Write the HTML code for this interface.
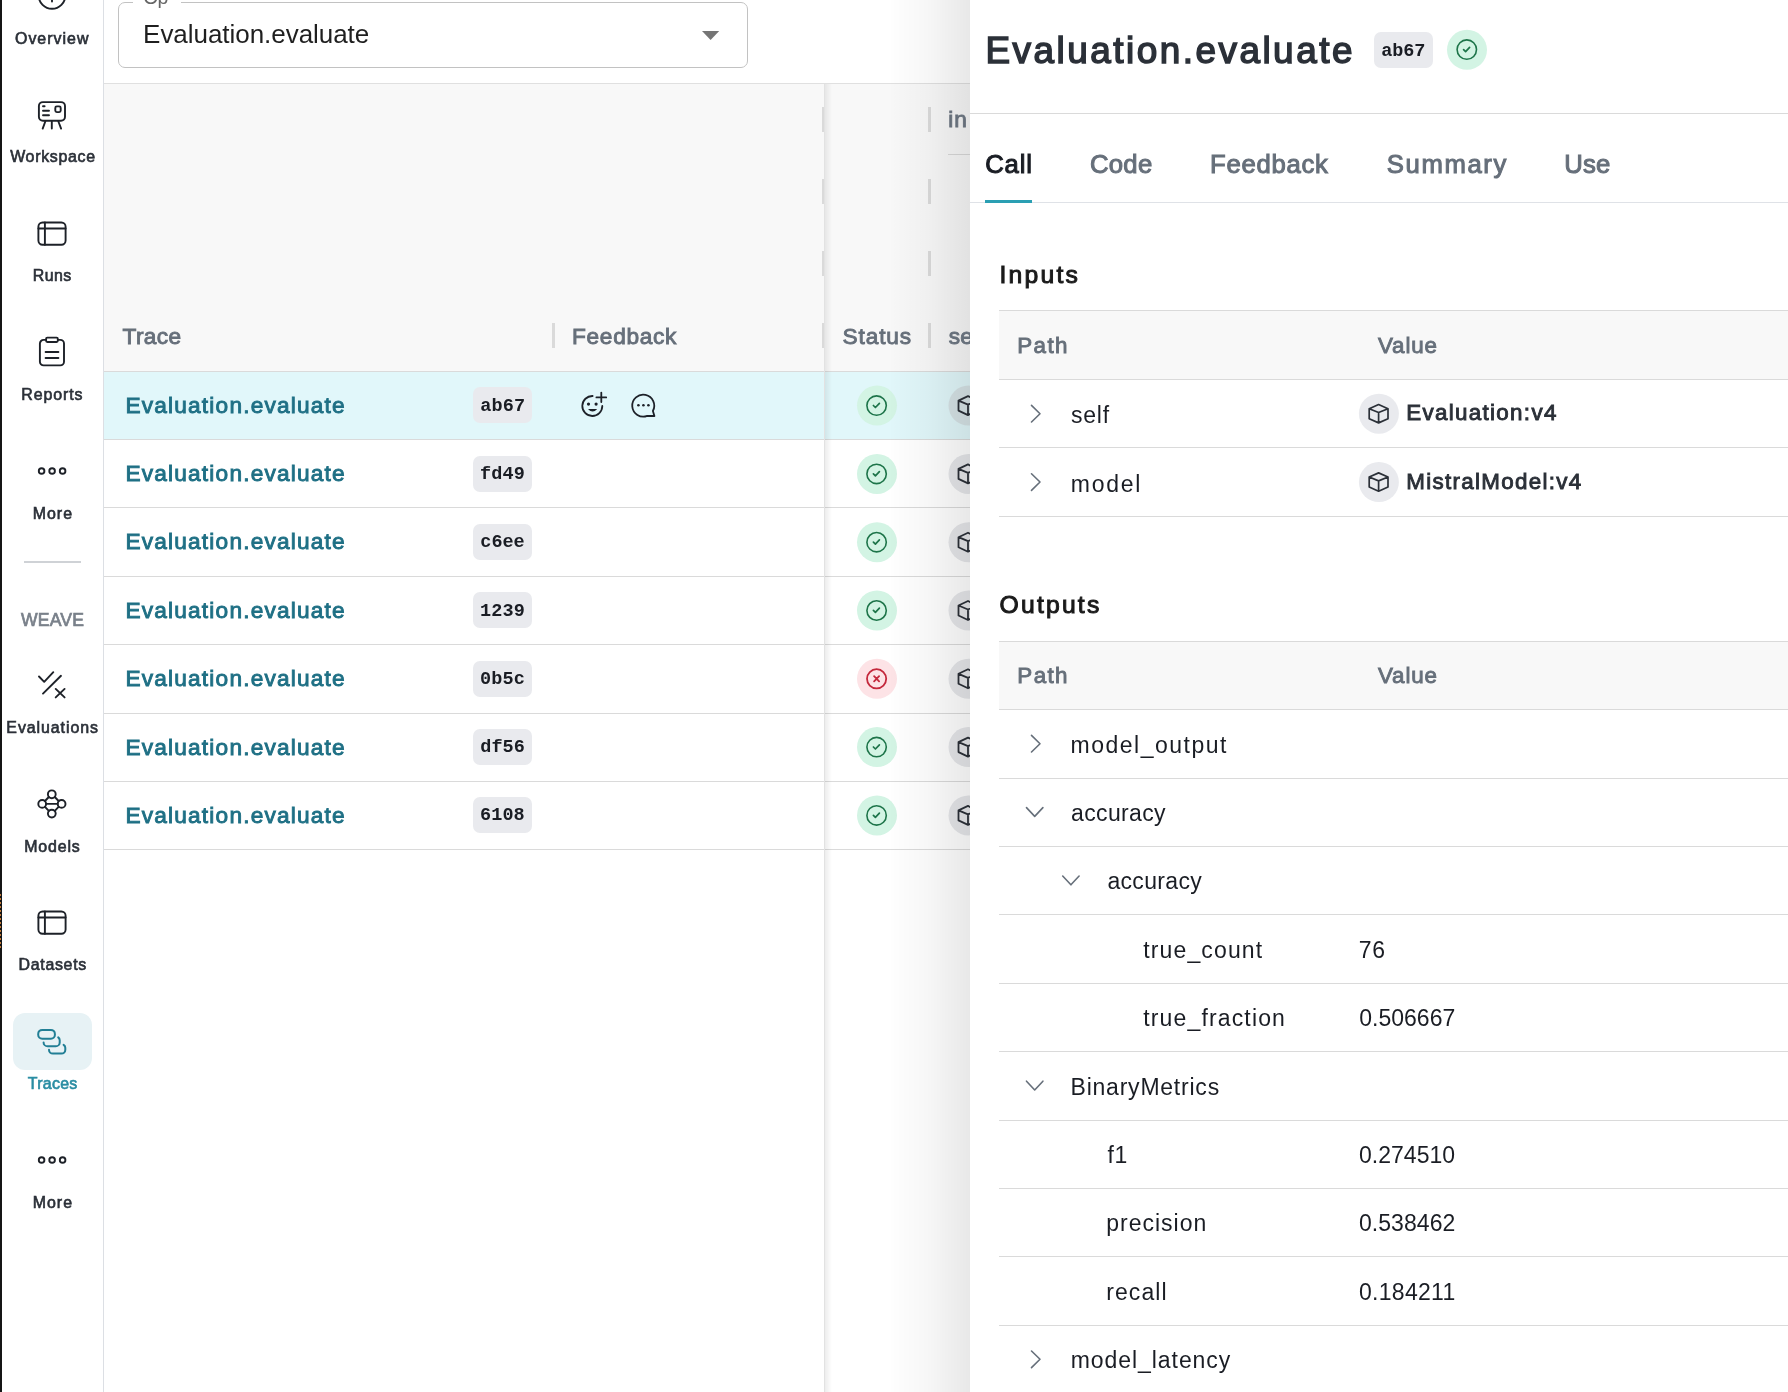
<!DOCTYPE html>
<html><head><meta charset="utf-8"><title>Weave Traces</title>
<style>
html,body{margin:0;padding:0;}
body{width:1788px;height:1392px;position:relative;overflow:hidden;background:#ffffff;font-family:"Liberation Sans",sans-serif;}
.b{position:absolute;}
.t{position:absolute;white-space:pre;}
.grp{position:absolute;overflow:hidden;will-change:transform;}
</style></head><body>
<div class="grp" style="left:0;top:0;width:104px;height:1392px;"><div class="b" style="left:0px;top:0px;width:2px;height:1392px;background:#151515;"></div>
<div class="b" style="left:0px;top:894px;width:1px;height:54px;background:repeating-linear-gradient(to bottom, #c27a38 0px, #c27a38 2.5px, transparent 2.5px, transparent 4px);"></div>
<div class="b" style="left:103px;top:0px;width:1px;height:1392px;background:#dcdfe4;"></div>
<div class="b" style="left:24px;top:561px;width:57px;height:2px;background:#cfd2d6;"></div>
<div class="b" style="left:13px;top:1013px;width:79px;height:57px;background:#e7f2f5;border-radius:12px;"></div>
<svg class="b" style="left:0px;top:-20px;" width="104" height="1200" viewBox="0 -20 104 1200" fill="none"><circle cx="52" cy="-4.5" r="13.3" stroke="#1d2128" stroke-width="1.9" stroke-linecap="round" stroke-linejoin="round"/><path d="M52 -6 V1.5" stroke="#1d2128" stroke-width="1.9" stroke-linecap="round" stroke-linejoin="round"/><rect x="38.9" y="102.1" width="26.1" height="18.6" rx="4" stroke="#1d2128" stroke-width="1.9" stroke-linecap="round" stroke-linejoin="round"/><path d="M43 106.2 H44.6 M43 110.7 H49 M43 115.3 H49" stroke="#1d2128" stroke-width="1.9" stroke-linecap="round" stroke-linejoin="round"/><rect x="55.3" y="106.4" width="5.4" height="5.7" rx="1.5" stroke="#1d2128" stroke-width="1.9" stroke-linecap="round" stroke-linejoin="round"/><path d="M45.3 121.5 L42.7 128.6 M51.8 121.5 V128.6 M58.4 121.5 L61.1 128.6" stroke="#1d2128" stroke-width="1.9" stroke-linecap="round" stroke-linejoin="round"/><rect x="38.4" y="222.5" width="27.2" height="22.2" rx="4.2" stroke="#1d2128" stroke-width="1.9" stroke-linecap="round" stroke-linejoin="round"/><path d="M38.4 228.5 H65.6 M44.9 222.5 V244.7" stroke="#1d2128" stroke-width="1.9" stroke-linecap="round" stroke-linejoin="round"/><path d="M46 339.9 H43.6 A3.7 3.7 0 0 0 39.9 343.6 V361.7 A3.7 3.7 0 0 0 43.6 365.4 H60.3 A3.7 3.7 0 0 0 64 361.7 V343.6 A3.7 3.7 0 0 0 60.3 339.9 H57.9" stroke="#1d2128" stroke-width="1.9" stroke-linecap="round" stroke-linejoin="round"/><rect x="46.1" y="337.6" width="11.7" height="4.4" rx="1.2" stroke="#1d2128" stroke-width="1.9" stroke-linecap="round" stroke-linejoin="round"/><path d="M45.6 352 H58.4 M45.6 358 H58.4" stroke="#1d2128" stroke-width="1.9" stroke-linecap="round" stroke-linejoin="round"/><circle cx="41.6" cy="471" r="2.8" stroke="#1d2128" stroke-width="1.9" stroke-linecap="round" stroke-linejoin="round"/><circle cx="52.1" cy="471" r="2.8" stroke="#1d2128" stroke-width="1.9" stroke-linecap="round" stroke-linejoin="round"/><circle cx="62.6" cy="471" r="2.8" stroke="#1d2128" stroke-width="1.9" stroke-linecap="round" stroke-linejoin="round"/><circle cx="41.6" cy="1160" r="2.8" stroke="#1d2128" stroke-width="1.9" stroke-linecap="round" stroke-linejoin="round"/><circle cx="52.1" cy="1160" r="2.8" stroke="#1d2128" stroke-width="1.9" stroke-linecap="round" stroke-linejoin="round"/><circle cx="62.6" cy="1160" r="2.8" stroke="#1d2128" stroke-width="1.9" stroke-linecap="round" stroke-linejoin="round"/><path d="M39 676.5 L44.2 681.8 L53.3 672.2 M43 693.6 L61 675.8 M55.7 688.9 L64.6 697.4 M64.6 688.9 L55.7 697.4" stroke="#1d2128" stroke-width="1.9" stroke-linecap="round" stroke-linejoin="round"/><circle cx="51.8" cy="794.3" r="3.9" stroke="#1d2128" stroke-width="1.9" stroke-linecap="round" stroke-linejoin="round"/><circle cx="51.8" cy="813.6" r="3.9" stroke="#1d2128" stroke-width="1.9" stroke-linecap="round" stroke-linejoin="round"/><circle cx="42.2" cy="803.9" r="3.9" stroke="#1d2128" stroke-width="1.9" stroke-linecap="round" stroke-linejoin="round"/><circle cx="61.6" cy="803.9" r="3.9" stroke="#1d2128" stroke-width="1.9" stroke-linecap="round" stroke-linejoin="round"/><path d="M46.1 803.9 H57.7 M45 801 L48.8 797 M54.8 797 L58.6 801 M45 806.8 L48.8 810.8 M54.8 810.8 L58.6 806.8" stroke="#1d2128" stroke-width="1.9" stroke-linecap="round" stroke-linejoin="round"/><rect x="38.4" y="911.5" width="27.2" height="22.2" rx="4.2" stroke="#1d2128" stroke-width="1.9" stroke-linecap="round" stroke-linejoin="round"/><path d="M38.4 917.5 H65.6 M44.9 911.5 V933.7" stroke="#1d2128" stroke-width="1.9" stroke-linecap="round" stroke-linejoin="round"/></svg>
<svg class="b" style="left:30px;top:1020px;" width="44" height="44" viewBox="30 1020 44 44" fill="none"><rect x="38.2" y="1029.9" width="16.7" height="8.9" rx="4" stroke="#227f95" stroke-width="2" stroke-linecap="round" stroke-linejoin="round"/><path d="M58.2 1037.4 A3.6 3.6 0 0 1 59.7 1040.3 V1042.4 A3.9 3.9 0 0 1 55.8 1046.3 H47.5 A3.9 3.9 0 0 1 43.6 1042.4" stroke="#227f95" stroke-width="2" stroke-linecap="round" stroke-linejoin="round"/><path d="M63.6 1044.8 A3.6 3.6 0 0 1 65.3 1047.8 V1049.7 A3.9 3.9 0 0 1 61.4 1053.6 H52.9 A3.9 3.9 0 0 1 49 1049.7" stroke="#227f95" stroke-width="2" stroke-linecap="round" stroke-linejoin="round"/></svg><div class="t" style="left:15.02px;top:30.79px;font:400 15.934px/15.934px 'Liberation Sans';letter-spacing:1.002px;color:#2b3038;-webkit-text-stroke:0.637px #2b3038;">Overview</div>
<div class="t" style="left:10.16px;top:149.39px;font:400 15.934px/15.934px 'Liberation Sans';letter-spacing:0.701px;color:#2b3038;-webkit-text-stroke:0.637px #2b3038;">Workspace</div>
<div class="t" style="left:32.84px;top:267.59px;font:400 15.934px/15.934px 'Liberation Sans';letter-spacing:0.396px;color:#2b3038;-webkit-text-stroke:0.637px #2b3038;">Runs</div>
<div class="t" style="left:21.34px;top:386.59px;font:400 15.934px/15.934px 'Liberation Sans';letter-spacing:0.908px;color:#2b3038;-webkit-text-stroke:0.637px #2b3038;">Reports</div>
<div class="t" style="left:32.64px;top:505.79px;font:400 15.934px/15.934px 'Liberation Sans';letter-spacing:1.035px;color:#2b3038;-webkit-text-stroke:0.637px #2b3038;">More</div>
<div class="t" style="left:6.34px;top:719.79px;font:400 15.934px/15.934px 'Liberation Sans';letter-spacing:0.930px;color:#2b3038;-webkit-text-stroke:0.637px #2b3038;">Evaluations</div>
<div class="t" style="left:24.14px;top:838.79px;font:400 15.934px/15.934px 'Liberation Sans';letter-spacing:0.862px;color:#2b3038;-webkit-text-stroke:0.637px #2b3038;">Models</div>
<div class="t" style="left:18.54px;top:957.09px;font:400 15.934px/15.934px 'Liberation Sans';letter-spacing:0.691px;color:#2b3038;-webkit-text-stroke:0.637px #2b3038;">Datasets</div>
<div class="t" style="left:32.64px;top:1194.79px;font:400 15.934px/15.934px 'Liberation Sans';letter-spacing:1.035px;color:#2b3038;-webkit-text-stroke:0.637px #2b3038;">More</div>
<div class="t" style="left:27.80px;top:1075.79px;font:400 15.934px/15.934px 'Liberation Sans';letter-spacing:0.280px;color:#2a8da3;-webkit-text-stroke:0.637px #2a8da3;">Traces</div>
<div class="t" style="left:20.88px;top:612.26px;font:400 17.582px/17.582px 'Liberation Sans';letter-spacing:0.228px;color:#79808a;-webkit-text-stroke:0.703px #79808a;">WEAVE</div></div>
<div class="grp" style="left:0;top:0;width:970px;height:1392px;"><div class="b" style="left:118px;top:2px;width:630px;height:66px;background:transparent;box-sizing:border-box;border:1.3px solid #c2c2c2;border-radius:7px;"></div>
<div class="b" style="left:133px;top:0px;width:48px;height:6px;background:#ffffff;"></div>
<svg class="b" style="left:700px;top:28px;" width="24" height="16" viewBox="700 28 24 16" fill="none"><path d="M702 31 H719.2 L710.6 40 Z" fill="#757575"/></svg>
<div class="b" style="left:104px;top:83px;width:866px;height:1px;background:#e0e0e0;"></div>
<div class="b" style="left:104px;top:84px;width:866px;height:287px;background:#f8f8f8;"></div>
<div class="b" style="left:104px;top:371px;width:866px;height:1px;background:#dadada;"></div>
<div class="b" style="left:822px;top:107.0px;width:2.5px;height:25px;background:#dadada;"></div>
<div class="b" style="left:928px;top:107.0px;width:3px;height:25px;background:#dadada;"></div>
<div class="b" style="left:822px;top:179.0px;width:2.5px;height:25px;background:#dadada;"></div>
<div class="b" style="left:928px;top:179.0px;width:3px;height:25px;background:#dadada;"></div>
<div class="b" style="left:822px;top:251.0px;width:2.5px;height:25px;background:#dadada;"></div>
<div class="b" style="left:928px;top:251.0px;width:3px;height:25px;background:#dadada;"></div>
<div class="b" style="left:822px;top:323.0px;width:2.5px;height:25px;background:#dadada;"></div>
<div class="b" style="left:928px;top:323.0px;width:3px;height:25px;background:#dadada;"></div>
<div class="b" style="left:552px;top:323px;width:3px;height:25px;background:#dadada;"></div>
<div class="b" style="left:948px;top:154px;width:22px;height:1px;background:#d9d9d9;"></div>
<div class="b" style="left:104px;top:372px;width:866px;height:67px;background:#e1f7fa;"></div>
<div class="b" style="left:104px;top:439px;width:866px;height:1px;background:#dadada;"></div>
<div class="b" style="left:473px;top:387px;width:59px;height:36px;background:#e9eaee;border-radius:7px;"></div>
<svg class="b" style="left:855px;top:384px;" width="44" height="44" viewBox="855 384 44 44" fill="none"><circle cx="877" cy="405.59999999999997" r="20" fill="#d3f4e4"/><circle cx="876.6" cy="405.59999999999997" r="9.7" stroke="#1d7449" stroke-width="1.6"/><path d="M873.4 405.49999999999994 L875.4 407.49999999999994 L879.4 403.29999999999995" stroke="#1d7449" stroke-width="1.7" stroke-linecap="round" stroke-linejoin="round"/></svg>
<svg class="b" style="left:940px;top:384px;" width="30" height="44" viewBox="940 384 30 44" fill="none"><circle cx="968.5" cy="405.59999999999997" r="20" fill="#d6e3e6"/><path d="M958.5 400.59999999999997 L968 396.09999999999997 L977 400.59999999999997 V410.59999999999997 L968 415.09999999999997 L958.5 410.59999999999997 Z M958.5 400.59999999999997 L968 404.59999999999997 L977 400.59999999999997 M968 404.59999999999997 V415.09999999999997" stroke="#2b3038" stroke-width="1.8" stroke-linejoin="round"/></svg>
<div class="b" style="left:104px;top:507px;width:866px;height:1px;background:#dadada;"></div>
<div class="b" style="left:473px;top:456px;width:59px;height:36px;background:#e9eaee;border-radius:7px;"></div>
<svg class="b" style="left:855px;top:452px;" width="44" height="44" viewBox="855 452 44 44" fill="none"><circle cx="877" cy="473.9" r="20" fill="#d3f4e4"/><circle cx="876.6" cy="473.9" r="9.7" stroke="#1d7449" stroke-width="1.6"/><path d="M873.4 473.79999999999995 L875.4 475.79999999999995 L879.4 471.59999999999997" stroke="#1d7449" stroke-width="1.7" stroke-linecap="round" stroke-linejoin="round"/></svg>
<svg class="b" style="left:940px;top:452px;" width="30" height="44" viewBox="940 452 30 44" fill="none"><circle cx="968.5" cy="473.9" r="20" fill="#e6e7ea"/><path d="M958.5 468.9 L968 464.4 L977 468.9 V478.9 L968 483.4 L958.5 478.9 Z M958.5 468.9 L968 472.9 L977 468.9 M968 472.9 V483.4" stroke="#2b3038" stroke-width="1.8" stroke-linejoin="round"/></svg>
<div class="b" style="left:104px;top:576px;width:866px;height:1px;background:#dadada;"></div>
<div class="b" style="left:473px;top:524px;width:59px;height:36px;background:#e9eaee;border-radius:7px;"></div>
<svg class="b" style="left:855px;top:520px;" width="44" height="44" viewBox="855 520 44 44" fill="none"><circle cx="877" cy="542.2" r="20" fill="#d3f4e4"/><circle cx="876.6" cy="542.2" r="9.7" stroke="#1d7449" stroke-width="1.6"/><path d="M873.4 542.1 L875.4 544.1 L879.4 539.9000000000001" stroke="#1d7449" stroke-width="1.7" stroke-linecap="round" stroke-linejoin="round"/></svg>
<svg class="b" style="left:940px;top:520px;" width="30" height="44" viewBox="940 520 30 44" fill="none"><circle cx="968.5" cy="542.2" r="20" fill="#e6e7ea"/><path d="M958.5 537.2 L968 532.7 L977 537.2 V547.2 L968 551.7 L958.5 547.2 Z M958.5 537.2 L968 541.2 L977 537.2 M968 541.2 V551.7" stroke="#2b3038" stroke-width="1.8" stroke-linejoin="round"/></svg>
<div class="b" style="left:104px;top:644px;width:866px;height:1px;background:#dadada;"></div>
<div class="b" style="left:473px;top:592px;width:59px;height:36px;background:#e9eaee;border-radius:7px;"></div>
<svg class="b" style="left:855px;top:588px;" width="44" height="44" viewBox="855 588 44 44" fill="none"><circle cx="877" cy="610.5" r="20" fill="#d3f4e4"/><circle cx="876.6" cy="610.5" r="9.7" stroke="#1d7449" stroke-width="1.6"/><path d="M873.4 610.4 L875.4 612.4 L879.4 608.2" stroke="#1d7449" stroke-width="1.7" stroke-linecap="round" stroke-linejoin="round"/></svg>
<svg class="b" style="left:940px;top:588px;" width="30" height="44" viewBox="940 588 30 44" fill="none"><circle cx="968.5" cy="610.5" r="20" fill="#e6e7ea"/><path d="M958.5 605.5 L968 601.0 L977 605.5 V615.5 L968 620.0 L958.5 615.5 Z M958.5 605.5 L968 609.5 L977 605.5 M968 609.5 V620.0" stroke="#2b3038" stroke-width="1.8" stroke-linejoin="round"/></svg>
<div class="b" style="left:104px;top:713px;width:866px;height:1px;background:#dadada;"></div>
<div class="b" style="left:473px;top:661px;width:59px;height:36px;background:#e9eaee;border-radius:7px;"></div>
<svg class="b" style="left:855px;top:657px;" width="44" height="44" viewBox="855 657 44 44" fill="none"><circle cx="877" cy="678.8" r="20" fill="#fde3e6"/><circle cx="876.6" cy="678.8" r="9.6" stroke="#c4283c" stroke-width="1.8"/><path d="M874.1 676.1999999999999 L879.1 681.4 M879.1 676.1999999999999 L874.1 681.4" stroke="#c4283c" stroke-width="1.8" stroke-linecap="round"/></svg>
<svg class="b" style="left:940px;top:657px;" width="30" height="44" viewBox="940 657 30 44" fill="none"><circle cx="968.5" cy="678.8" r="20" fill="#e6e7ea"/><path d="M958.5 673.8 L968 669.3 L977 673.8 V683.8 L968 688.3 L958.5 683.8 Z M958.5 673.8 L968 677.8 L977 673.8 M968 677.8 V688.3" stroke="#2b3038" stroke-width="1.8" stroke-linejoin="round"/></svg>
<div class="b" style="left:104px;top:781px;width:866px;height:1px;background:#dadada;"></div>
<div class="b" style="left:473px;top:729px;width:59px;height:36px;background:#e9eaee;border-radius:7px;"></div>
<svg class="b" style="left:855px;top:725px;" width="44" height="44" viewBox="855 725 44 44" fill="none"><circle cx="877" cy="747.1" r="20" fill="#d3f4e4"/><circle cx="876.6" cy="747.1" r="9.7" stroke="#1d7449" stroke-width="1.6"/><path d="M873.4 747.0 L875.4 749.0 L879.4 744.8000000000001" stroke="#1d7449" stroke-width="1.7" stroke-linecap="round" stroke-linejoin="round"/></svg>
<svg class="b" style="left:940px;top:725px;" width="30" height="44" viewBox="940 725 30 44" fill="none"><circle cx="968.5" cy="747.1" r="20" fill="#e6e7ea"/><path d="M958.5 742.1 L968 737.6 L977 742.1 V752.1 L968 756.6 L958.5 752.1 Z M958.5 742.1 L968 746.1 L977 742.1 M968 746.1 V756.6" stroke="#2b3038" stroke-width="1.8" stroke-linejoin="round"/></svg>
<div class="b" style="left:104px;top:849px;width:866px;height:1px;background:#dadada;"></div>
<div class="b" style="left:473px;top:797px;width:59px;height:36px;background:#e9eaee;border-radius:7px;"></div>
<svg class="b" style="left:855px;top:793px;" width="44" height="44" viewBox="855 793 44 44" fill="none"><circle cx="877" cy="815.4" r="20" fill="#d3f4e4"/><circle cx="876.6" cy="815.4" r="9.7" stroke="#1d7449" stroke-width="1.6"/><path d="M873.4 815.3 L875.4 817.3 L879.4 813.1" stroke="#1d7449" stroke-width="1.7" stroke-linecap="round" stroke-linejoin="round"/></svg>
<svg class="b" style="left:940px;top:793px;" width="30" height="44" viewBox="940 793 30 44" fill="none"><circle cx="968.5" cy="815.4" r="20" fill="#e6e7ea"/><path d="M958.5 810.4 L968 805.9 L977 810.4 V820.4 L968 824.9 L958.5 820.4 Z M958.5 810.4 L968 814.4 L977 810.4 M968 814.4 V824.9" stroke="#2b3038" stroke-width="1.8" stroke-linejoin="round"/></svg>
<svg class="b" style="left:576px;top:386px;" width="90" height="40" viewBox="576 386 90 40" fill="none"><path d="M592.6 396 A10 10 0 1 0 602.3 406" stroke="#1d2128" stroke-width="1.8" stroke-linecap="round" stroke-linejoin="round"/><circle cx="588.5" cy="404.1" r="1.6" fill="#1d2128"/><circle cx="596.1" cy="404.1" r="1.6" fill="#1d2128"/><path d="M588 409 H597.2 Q592.6 414.2 588 409 Z" fill="#1d2128"/><path d="M601.3 392.6 V402 M596.4 397.4 H606.2" stroke="#1d2128" stroke-width="1.8" stroke-linecap="round" stroke-linejoin="round"/><path d="M652.9 410.9 A11 11 0 1 0 647.2 415.9 L654.4 416 Z" stroke="#1d2128" stroke-width="1.8" stroke-linecap="round" stroke-linejoin="round"/><circle cx="638.4" cy="405.3" r="1.3" fill="#1d2128"/><circle cx="643.4" cy="405.3" r="1.3" fill="#1d2128"/><circle cx="648.4" cy="405.3" r="1.3" fill="#1d2128"/></svg>
<div class="b" style="left:824px;top:84px;width:1px;height:1308px;background:#e2e2e2;"></div>
<div class="b" style="left:825px;top:84px;width:7px;height:1308px;background:linear-gradient(to right, rgba(0,0,0,0.07), rgba(0,0,0,0));"></div>
<div class="b" style="left:891px;top:0px;width:79px;height:1392px;background:linear-gradient(to right, rgba(0,0,0,0.004), rgba(0,0,0,0.03) 45%, rgba(0,0,0,0.09));"></div><div class="t" style="left:143.22px;top:-12.21px;font:400 19.500px/19.500px 'Liberation Sans';letter-spacing:-0.780px;color:#666666;">Op</div>
<div class="t" style="left:143.12px;top:21.29px;font:400 26.000px/26.000px 'Liberation Sans';letter-spacing:-0.044px;color:#1f1f1f;">Evaluation.evaluate</div>
<div class="t" style="left:125.44px;top:394.06px;font:400 22.665px/22.665px 'Liberation Sans';letter-spacing:1.193px;color:#1f7085;-webkit-text-stroke:0.907px #1f7085;">Evaluation.evaluate</div>
<div class="t" style="left:480.27px;top:397.61px;font:700 18.522px/18.522px 'Liberation Mono';letter-spacing:0.124px;color:#1a1d24;">ab67</div>
<div class="t" style="left:125.44px;top:462.06px;font:400 22.665px/22.665px 'Liberation Sans';letter-spacing:1.193px;color:#1f7085;-webkit-text-stroke:0.907px #1f7085;">Evaluation.evaluate</div>
<div class="t" style="left:480.09px;top:465.91px;font:700 18.522px/18.522px 'Liberation Mono';letter-spacing:0.124px;color:#1a1d24;">fd49</div>
<div class="t" style="left:125.44px;top:530.06px;font:400 22.665px/22.665px 'Liberation Sans';letter-spacing:1.193px;color:#1f7085;-webkit-text-stroke:0.907px #1f7085;">Evaluation.evaluate</div>
<div class="t" style="left:480.27px;top:534.21px;font:700 18.522px/18.522px 'Liberation Mono';letter-spacing:0.000px;color:#1a1d24;">c6ee</div>
<div class="t" style="left:125.44px;top:599.06px;font:400 22.665px/22.665px 'Liberation Sans';letter-spacing:1.193px;color:#1f7085;-webkit-text-stroke:0.907px #1f7085;">Evaluation.evaluate</div>
<div class="t" style="left:479.90px;top:602.51px;font:700 18.522px/18.522px 'Liberation Mono';letter-spacing:0.185px;color:#1a1d24;">1239</div>
<div class="t" style="left:125.44px;top:667.06px;font:400 22.665px/22.665px 'Liberation Sans';letter-spacing:1.193px;color:#1f7085;-webkit-text-stroke:0.907px #1f7085;">Evaluation.evaluate</div>
<div class="t" style="left:480.09px;top:670.81px;font:700 18.522px/18.522px 'Liberation Mono';letter-spacing:0.124px;color:#1a1d24;">0b5c</div>
<div class="t" style="left:125.44px;top:736.06px;font:400 22.665px/22.665px 'Liberation Sans';letter-spacing:1.193px;color:#1f7085;-webkit-text-stroke:0.907px #1f7085;">Evaluation.evaluate</div>
<div class="t" style="left:480.27px;top:739.11px;font:700 18.522px/18.522px 'Liberation Mono';letter-spacing:0.062px;color:#1a1d24;">df56</div>
<div class="t" style="left:125.44px;top:804.06px;font:400 22.665px/22.665px 'Liberation Sans';letter-spacing:1.193px;color:#1f7085;-webkit-text-stroke:0.907px #1f7085;">Evaluation.evaluate</div>
<div class="t" style="left:480.09px;top:807.41px;font:700 18.522px/18.522px 'Liberation Mono';letter-spacing:0.062px;color:#1a1d24;">6108</div>
<div class="t" style="left:122.60px;top:325.16px;font:400 22.665px/22.665px 'Liberation Sans';letter-spacing:0.366px;color:#666f7a;-webkit-text-stroke:0.907px #666f7a;">Trace</div>
<div class="t" style="left:572.04px;top:325.16px;font:400 22.665px/22.665px 'Liberation Sans';letter-spacing:0.687px;color:#666f7a;-webkit-text-stroke:0.907px #666f7a;">Feedback</div>
<div class="t" style="left:842.42px;top:325.16px;font:400 22.665px/22.665px 'Liberation Sans';letter-spacing:0.913px;color:#666f7a;-webkit-text-stroke:0.907px #666f7a;">Status</div>
<div class="t" style="left:948.67px;top:325.16px;font:400 22.665px/22.665px 'Liberation Sans';letter-spacing:0.300px;color:#666f7a;-webkit-text-stroke:0.907px #666f7a;">se</div>
<div class="t" style="left:948.37px;top:108.06px;font:400 22.665px/22.665px 'Liberation Sans';letter-spacing:0.800px;color:#666f7a;-webkit-text-stroke:0.907px #666f7a;">in</div></div>
<div class="grp" style="left:0;top:0;width:1788px;height:1392px;"><div class="b" style="left:970px;top:0;width:818px;height:1392px;background:#fff"></div><div class="b" style="left:1374px;top:32px;width:59px;height:35.5px;background:#e9eaee;border-radius:7px;"></div>
<svg class="b" style="left:1445px;top:28px;" width="44" height="44" viewBox="1445 28 44 44" fill="none"><circle cx="1467" cy="49.8" r="20" fill="#d3f4e4"/><circle cx="1466.8" cy="49.6" r="9.7" stroke="#1d7449" stroke-width="1.6"/><path d="M1463.6 49.6 L1465.6 51.6 L1469.6 47.4" stroke="#1d7449" stroke-width="1.7" stroke-linecap="round" stroke-linejoin="round"/></svg>
<div class="b" style="left:970px;top:113px;width:818px;height:1px;background:#dadada;"></div>
<div class="b" style="left:970px;top:202px;width:818px;height:1px;background:#dfe2e7;"></div>
<div class="b" style="left:985px;top:200px;width:47px;height:3px;background:#2a9fb3;"></div>
<div class="b" style="left:999px;top:310px;width:789px;height:1px;background:#dadada;"></div>
<div class="b" style="left:999px;top:311px;width:789px;height:68px;background:#f8f8f8;"></div>
<div class="b" style="left:999px;top:379px;width:789px;height:1px;background:#dadada;"></div>
<div class="b" style="left:999px;top:447px;width:789px;height:1px;background:#dadada;"></div>
<svg class="b" style="left:1356px;top:392px;" width="46" height="44" viewBox="1356 392 46 44" fill="none"><circle cx="1378.9" cy="413.7" r="20" fill="#e9eaee"/><path d="M1369.2 408.7 L1378.6 404.5 L1388 408.7 V418.7 L1378.6 422.9 L1369.2 418.7 Z M1369.2 408.7 L1378.6 412.5 L1388 408.7 M1378.6 412.5 V422.9" stroke="#2b3038" stroke-width="1.7" stroke-linejoin="round"/></svg>
<div class="b" style="left:999px;top:516px;width:789px;height:1px;background:#dadada;"></div>
<svg class="b" style="left:1356px;top:460px;" width="46" height="44" viewBox="1356 460 46 44" fill="none"><circle cx="1378.9" cy="482.05" r="20" fill="#e9eaee"/><path d="M1369.2 477.05 L1378.6 472.85 L1388 477.05 V487.05 L1378.6 491.25 L1369.2 487.05 Z M1369.2 477.05 L1378.6 480.85 L1388 477.05 M1378.6 480.85 V491.25" stroke="#2b3038" stroke-width="1.7" stroke-linejoin="round"/></svg>
<div class="b" style="left:999px;top:641px;width:789px;height:1px;background:#dadada;"></div>
<div class="b" style="left:999px;top:642px;width:789px;height:67px;background:#f8f8f8;"></div>
<div class="b" style="left:999px;top:709px;width:789px;height:1px;background:#dadada;"></div>
<div class="b" style="left:999px;top:778px;width:789px;height:1px;background:#dadada;"></div>
<div class="b" style="left:999px;top:846px;width:789px;height:1px;background:#dadada;"></div>
<div class="b" style="left:999px;top:914px;width:789px;height:1px;background:#dadada;"></div>
<div class="b" style="left:999px;top:983px;width:789px;height:1px;background:#dadada;"></div>
<div class="b" style="left:999px;top:1051px;width:789px;height:1px;background:#dadada;"></div>
<div class="b" style="left:999px;top:1120px;width:789px;height:1px;background:#dadada;"></div>
<div class="b" style="left:999px;top:1188px;width:789px;height:1px;background:#dadada;"></div>
<div class="b" style="left:999px;top:1256px;width:789px;height:1px;background:#dadada;"></div>
<div class="b" style="left:999px;top:1325px;width:789px;height:1px;background:#dadada;"></div>
<div class="b" style="left:999px;top:1393px;width:789px;height:1px;background:#dadada;"></div>
<svg class="b" style="left:1010px;top:380px;" width="80" height="1012" viewBox="1010 380 80 1012" fill="none"><path d="M1031.5 405.4 L1040.0 413.7 L1031.5 422.0" stroke="#666f7a" stroke-width="1.6" stroke-linecap="round" stroke-linejoin="round" fill="none"/><path d="M1031.5 473.75 L1040.0 482.05 L1031.5 490.35" stroke="#666f7a" stroke-width="1.6" stroke-linecap="round" stroke-linejoin="round" fill="none"/><path d="M1031.5 735.4000000000001 L1040.0 743.7 L1031.5 752.0" stroke="#666f7a" stroke-width="1.6" stroke-linecap="round" stroke-linejoin="round" fill="none"/><path d="M1026.5 807.6 L1034.7 816.4 L1042.9 807.6" stroke="#666f7a" stroke-width="1.6" stroke-linecap="round" stroke-linejoin="round" fill="none"/><path d="M1062.7 876.0 L1070.9 884.8 L1079.1000000000001 876.0" stroke="#666f7a" stroke-width="1.6" stroke-linecap="round" stroke-linejoin="round" fill="none"/><path d="M1026.5 1081.2 L1034.7 1090.0 L1042.9 1081.2" stroke="#666f7a" stroke-width="1.6" stroke-linecap="round" stroke-linejoin="round" fill="none"/><path d="M1031.5 1351.0 L1040.0 1359.3 L1031.5 1367.6" stroke="#666f7a" stroke-width="1.6" stroke-linecap="round" stroke-linejoin="round" fill="none"/></svg><div class="t" style="left:985.48px;top:32.58px;font:400 36.951px/36.951px 'Liberation Sans';letter-spacing:2.475px;color:#2b3038;-webkit-text-stroke:1.478px #2b3038;">Evaluation.evaluate</div>
<div class="t" style="left:1381.27px;top:42.61px;font:700 18.522px/18.522px 'Liberation Mono';letter-spacing:-0.076px;color:#1a1d24;">ab67</div>
<div class="t" style="left:985.13px;top:151.64px;font:400 25.687px/25.687px 'Liberation Sans';letter-spacing:0.872px;color:#1a1d24;-webkit-text-stroke:1.027px #1a1d24;">Call</div>
<div class="t" style="left:1090.03px;top:151.64px;font:400 25.687px/25.687px 'Liberation Sans';letter-spacing:0.264px;color:#666f7a;-webkit-text-stroke:1.027px #666f7a;">Code</div>
<div class="t" style="left:1209.96px;top:151.64px;font:400 25.687px/25.687px 'Liberation Sans';letter-spacing:0.752px;color:#666f7a;-webkit-text-stroke:1.027px #666f7a;">Feedback</div>
<div class="t" style="left:1386.73px;top:151.64px;font:400 25.687px/25.687px 'Liberation Sans';letter-spacing:1.629px;color:#666f7a;-webkit-text-stroke:1.027px #666f7a;">Summary</div>
<div class="t" style="left:1564.36px;top:151.64px;font:400 25.687px/25.687px 'Liberation Sans';letter-spacing:0.145px;color:#666f7a;-webkit-text-stroke:1.027px #666f7a;">Use</div>
<div class="t" style="left:999.47px;top:262.58px;font:400 24.725px/24.725px 'Liberation Sans';letter-spacing:2.225px;color:#1a1a1a;-webkit-text-stroke:0.989px #1a1a1a;">Inputs</div>
<div class="t" style="left:1017.26px;top:335.40px;font:400 22.390px/22.390px 'Liberation Sans';letter-spacing:1.380px;color:#666f7a;-webkit-text-stroke:0.896px #666f7a;">Path</div>
<div class="t" style="left:1377.92px;top:335.40px;font:400 22.390px/22.390px 'Liberation Sans';letter-spacing:0.899px;color:#666f7a;-webkit-text-stroke:0.896px #666f7a;">Value</div>
<div class="t" style="left:1071.11px;top:404.23px;font:400 23.000px/23.000px 'Liberation Sans';letter-spacing:0.737px;color:#1a1d24;">self</div>
<div class="t" style="left:1406.26px;top:402.30px;font:400 22.390px/22.390px 'Liberation Sans';letter-spacing:1.311px;color:#2b3038;-webkit-text-stroke:0.896px #2b3038;">Evaluation:v4</div>
<div class="t" style="left:1070.79px;top:472.58px;font:400 23.000px/23.000px 'Liberation Sans';letter-spacing:1.757px;color:#1a1d24;">model</div>
<div class="t" style="left:1406.26px;top:470.65px;font:400 22.390px/22.390px 'Liberation Sans';letter-spacing:1.310px;color:#2b3038;-webkit-text-stroke:0.896px #2b3038;">MistralModel:v4</div>
<div class="t" style="left:999.56px;top:592.58px;font:400 24.725px/24.725px 'Liberation Sans';letter-spacing:2.192px;color:#1a1a1a;-webkit-text-stroke:0.989px #1a1a1a;">Outputs</div>
<div class="t" style="left:1017.36px;top:665.40px;font:400 22.390px/22.390px 'Liberation Sans';letter-spacing:1.380px;color:#666f7a;-webkit-text-stroke:0.896px #666f7a;">Path</div>
<div class="t" style="left:1377.92px;top:665.40px;font:400 22.390px/22.390px 'Liberation Sans';letter-spacing:0.899px;color:#666f7a;-webkit-text-stroke:0.896px #666f7a;">Value</div>
<div class="t" style="left:1070.59px;top:733.53px;font:400 23.000px/23.000px 'Liberation Sans';letter-spacing:1.496px;color:#1a1d24;">model_output</div>
<div class="t" style="left:1070.98px;top:801.93px;font:400 23.000px/23.000px 'Liberation Sans';letter-spacing:0.374px;color:#1a1d24;">accuracy</div>
<div class="t" style="left:1107.38px;top:870.33px;font:400 23.000px/23.000px 'Liberation Sans';letter-spacing:0.331px;color:#1a1d24;">accuracy</div>
<div class="t" style="left:1143.29px;top:938.73px;font:400 23.000px/23.000px 'Liberation Sans';letter-spacing:1.128px;color:#1a1d24;">true_count</div>
<div class="t" style="left:1358.75px;top:938.73px;font:400 23.000px/23.000px 'Liberation Sans';letter-spacing:0.640px;color:#1a1d24;">76</div>
<div class="t" style="left:1143.29px;top:1007.13px;font:400 23.000px/23.000px 'Liberation Sans';letter-spacing:1.145px;color:#1a1d24;">true_fraction</div>
<div class="t" style="left:1359.18px;top:1007.13px;font:400 23.000px/23.000px 'Liberation Sans';letter-spacing:0.023px;color:#1a1d24;">0.506667</div>
<div class="t" style="left:1070.56px;top:1075.53px;font:400 23.000px/23.000px 'Liberation Sans';letter-spacing:0.773px;color:#1a1d24;">BinaryMetrics</div>
<div class="t" style="left:1107.57px;top:1143.93px;font:400 23.000px/23.000px 'Liberation Sans';letter-spacing:0.490px;color:#1a1d24;">f1</div>
<div class="t" style="left:1358.88px;top:1143.93px;font:400 23.000px/23.000px 'Liberation Sans';letter-spacing:0.047px;color:#1a1d24;">0.274510</div>
<div class="t" style="left:1106.19px;top:1212.33px;font:400 23.000px/23.000px 'Liberation Sans';letter-spacing:1.011px;color:#1a1d24;">precision</div>
<div class="t" style="left:1358.88px;top:1212.33px;font:400 23.000px/23.000px 'Liberation Sans';letter-spacing:0.080px;color:#1a1d24;">0.538462</div>
<div class="t" style="left:1106.19px;top:1280.73px;font:400 23.000px/23.000px 'Liberation Sans';letter-spacing:1.090px;color:#1a1d24;">recall</div>
<div class="t" style="left:1358.88px;top:1280.73px;font:400 23.000px/23.000px 'Liberation Sans';letter-spacing:0.310px;color:#1a1d24;">0.184211</div>
<div class="t" style="left:1070.79px;top:1349.13px;font:400 23.000px/23.000px 'Liberation Sans';letter-spacing:0.932px;color:#1a1d24;">model_latency</div></div>
</body></html>
